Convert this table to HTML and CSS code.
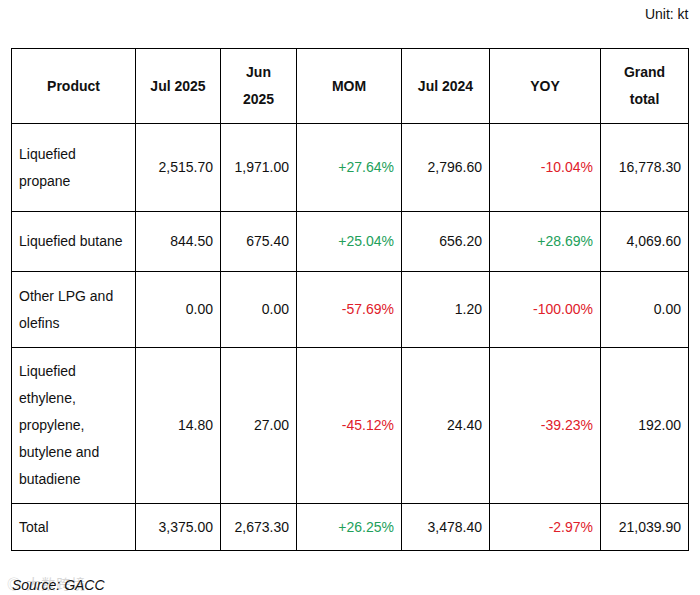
FILE: index.html
```html
<!DOCTYPE html>
<html lang="en">
<head>
<meta charset="utf-8">
<title>LPG imports</title>
<link rel="stylesheet" href="styles.css">
</head>
<body>
<div class="page">
  <div class="unit">Unit: kt</div>
  <table class="data">
    <colgroup>
      <col class="c1"><col class="c2"><col class="c3"><col class="c4"><col class="c5"><col class="c6"><col class="c7">
    </colgroup>
    <thead>
      <tr class="h-head">
        <th>Product</th><th>Jul 2025</th><th>Jun<br>2025</th><th>MOM</th><th>Jul 2024</th><th>YOY</th><th>Grand<br>total</th>
      </tr>
    </thead>
    <tbody>
      <tr class="h-r1">
        <td class="name">Liquefied<br>propane</td><td>2,515.70</td><td>1,971.00</td><td class="up">+27.64%</td><td>2,796.60</td><td class="down">-10.04%</td><td>16,778.30</td>
      </tr>
      <tr class="h-r2">
        <td class="name">Liquefied butane</td><td>844.50</td><td>675.40</td><td class="up">+25.04%</td><td>656.20</td><td class="up">+28.69%</td><td>4,069.60</td>
      </tr>
      <tr class="h-r3">
        <td class="name">Other LPG and<br>olefins</td><td>0.00</td><td>0.00</td><td class="down">-57.69%</td><td>1.20</td><td class="down">-100.00%</td><td>0.00</td>
      </tr>
      <tr class="h-r4">
        <td class="name">Liquefied<br>ethylene,<br>propylene,<br>butylene and<br>butadiene</td><td>14.80</td><td>27.00</td><td class="down">-45.12%</td><td>24.40</td><td class="down">-39.23%</td><td>192.00</td>
      </tr>
      <tr class="h-r5">
        <td class="name">Total</td><td>3,375.00</td><td>2,673.30</td><td class="up">+26.25%</td><td>3,478.40</td><td class="down">-2.97%</td><td>21,039.90</td>
      </tr>
    </tbody>
  </table>
  <div class="source">
    <span class="watermark">◎ 大数跨境</span>
    <span class="source-text">Source: GACC</span>
  </div>
</div>
</body>
</html>
```

FILE: styles.css
```css
html, body {
  margin: 0;
  padding: 0;
  background: #ffffff;
}

body {
  font-family: "Liberation Sans", Arial, sans-serif;
  font-size: 14px;
  color: #111111;
}

.page {
  padding: 0 12px 0 11px;
}

.unit {
  text-align: right;
  line-height: 20px;
  padding-top: 4px;
  margin-bottom: 24px;
  margin-right: -0.5px;
}

.data {
  width: 677px;
  border-collapse: collapse;
  table-layout: fixed;
}

.c1 { width: 124px; }
.c2 { width: 85px; }
.c3 { width: 76px; }
.c4 { width: 105px; }
.c5 { width: 88px; }
.c6 { width: 111px; }
.c7 { width: 88px; }

.data th,
.data td {
  border: 1px solid #000000;
  line-height: 27px;
  padding: 0 7px;
  vertical-align: middle;
}

.data th {
  font-weight: bold;
  text-align: center;
}

.data td {
  text-align: right;
}

.data td.name {
  text-align: left;
}

.data td.up {
  color: #22a05a;
}

.data td.down {
  color: #e0202a;
}

.h-head { height: 75px; }
.h-r1 { height: 88px; }
.h-r2 { height: 60px; }
.h-r3 { height: 76px; }
.h-r4 { height: 156px; }
.h-r5 { height: 47px; }

.source {
  position: relative;
  margin-top: 24px;
  line-height: 20px;
  padding-left: 1px;
}

.source-text {
  position: relative;
  font-style: italic;
}

.watermark {
  position: absolute;
  left: -4px;
  top: -2px;
  font-family: "Noto Sans CJK SC", "Liberation Sans", sans-serif;
  font-size: 14px;
  color: #d6d6d6;
  letter-spacing: 1px;
}
```
